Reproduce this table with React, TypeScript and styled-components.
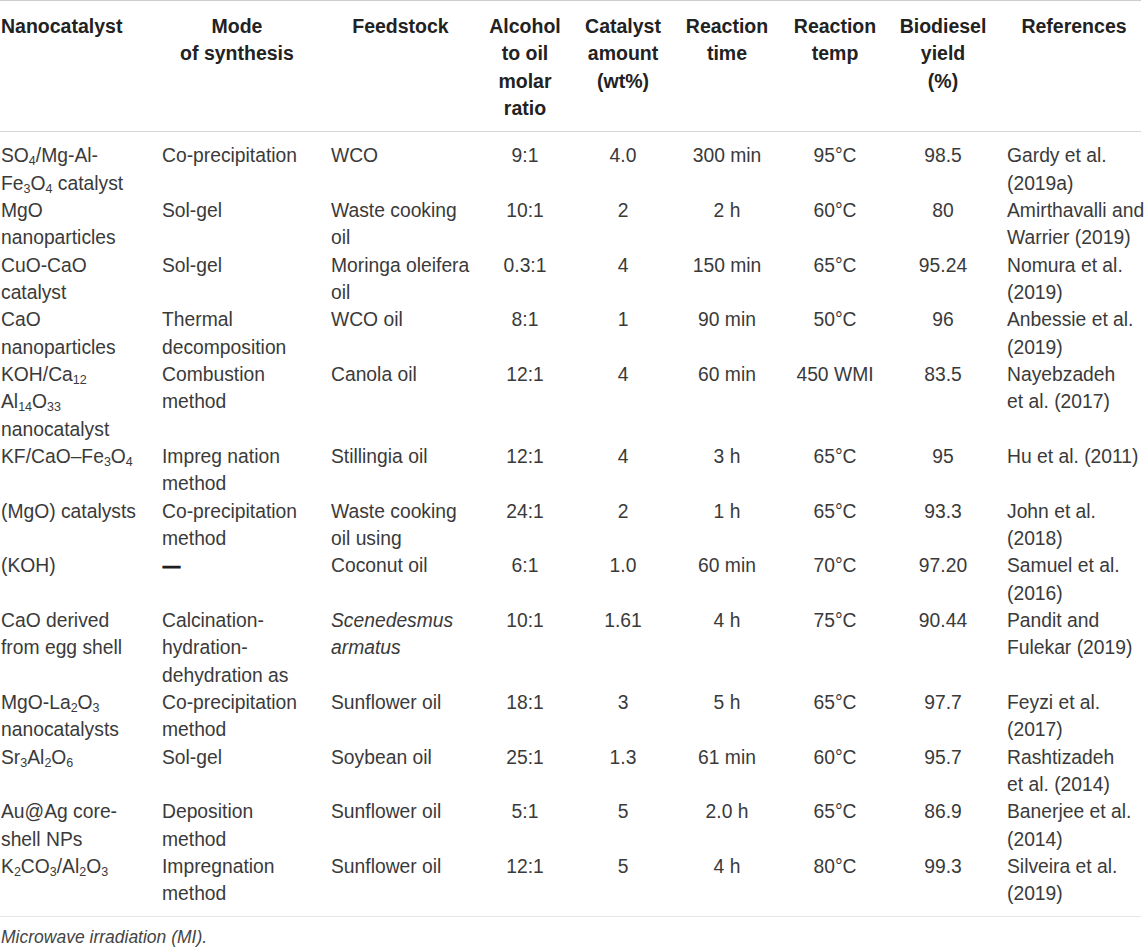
import React from "react";
import styled, { createGlobalStyle } from "styled-components";

const GlobalStyle = createGlobalStyle`
  html, body {
    margin: 0;
    padding: 0;
    background: #ffffff;
  }
  body {
    font-family: "Liberation Sans", Arial, Helvetica, sans-serif;
    color: #333333;
  }
`;

type Align = "left" | "center";

interface ColSpec {
  width: number;
  padL: number;
  padR: number;
  headAlign: Align;
  bodyAlign: Align;
}

const cols: ColSpec[] = [
  { width: 158, padL: 1, padR: 4, headAlign: "left", bodyAlign: "left" },
  { width: 158, padL: 4, padR: 4, headAlign: "center", bodyAlign: "left" },
  { width: 163, padL: 15, padR: 9, headAlign: "center", bodyAlign: "left" },
  { width: 92, padL: 4, padR: 4, headAlign: "center", bodyAlign: "center" },
  { width: 104, padL: 4, padR: 4, headAlign: "center", bodyAlign: "center" },
  { width: 104, padL: 4, padR: 4, headAlign: "center", bodyAlign: "center" },
  { width: 112, padL: 4, padR: 4, headAlign: "center", bodyAlign: "center" },
  { width: 104, padL: 4, padR: 4, headAlign: "center", bodyAlign: "center" },
  { width: 146, padL: 12, padR: 0, headAlign: "center", bodyAlign: "left" },
];

const Page = styled.div`
  width: 1145px;
  padding: 0;
`;

const Table = styled.table`
  width: 1141px;
  table-layout: fixed;
  border-collapse: separate;
  border-spacing: 0;
`;

const Col = styled.col<{ $w: number }>`
  width: ${(p) => p.$w}px;
`;

const HeadCell = styled.th<{ $align: Align; $padL: number; $padR: number }>`
  font-family: "Liberation Sans", Arial, Helvetica, sans-serif;
  font-weight: 700;
  font-size: 19.5px;
  line-height: 27.33px;
  color: #222222;
  text-align: ${(p) => p.$align};
  vertical-align: top;
  white-space: nowrap;
  padding: 12px ${(p) => p.$padR}px 9px ${(p) => p.$padL}px;
  border-top: 1px solid #cdcdcd;
  border-bottom: 1px solid #d6d6d6;
`;

const Body = styled.tbody`
  tr:first-child td {
    padding-top: 10px;
  }
  tr:last-child td {
    padding-bottom: 8px;
    border-bottom: 1px solid #e6e6e6;
  }
`;

const Cell = styled.td<{ $align: Align; $padL: number; $padR: number }>`
  font-family: "Liberation Sans", Arial, Helvetica, sans-serif;
  font-weight: 400;
  font-size: 19.3px;
  line-height: 27.33px;
  color: #3a3a3a;
  text-align: ${(p) => p.$align};
  vertical-align: top;
  white-space: nowrap;
  padding: 0 ${(p) => p.$padR}px 0 ${(p) => p.$padL}px;
`;

const Sub = styled.sub`
  font-size: 12.5px;
  line-height: 0;
  vertical-align: -3px;
`;

const Italic = styled.em`
  font-style: italic;
`;

const Dash = styled.span`
  font-weight: 700;
  font-size: 17px;
  color: #1e1e1e;
  -webkit-text-stroke: 1.2px #1e1e1e;
  margin-left: 1px;
`;

const Note = styled.p`
  margin: 9px 0 0 1px;
  font-family: "Liberation Sans", Arial, Helvetica, sans-serif;
  font-style: italic;
  font-size: 17.5px;
  line-height: 22px;
  color: #444444;
`;

type Content = React.ReactNode[];

const Lines: React.FC<{ lines: Content }> = ({ lines }) => (
  <>
    {lines.map((l, i) => (
      <React.Fragment key={i}>
        {i > 0 && <br />}
        {l}
      </React.Fragment>
    ))}
  </>
);

const header: Content[] = [
  ["Nanocatalyst"],
  ["Mode", "of synthesis"],
  ["Feedstock"],
  ["Alcohol", "to oil", "molar", "ratio"],
  ["Catalyst", "amount", "(wt%)"],
  ["Reaction", "time"],
  ["Reaction", "temp"],
  ["Biodiesel", "yield", "(%)"],
  ["References"],
];

const rows: Content[][] = [
  [
    [<>SO<Sub>4</Sub>/Mg-Al-</>, <>Fe<Sub>3</Sub>O<Sub>4</Sub> catalyst</>],
    ["Co-precipitation"],
    ["WCO"],
    ["9:1"],
    ["4.0"],
    ["300 min"],
    ["95°C"],
    ["98.5"],
    ["Gardy et al.", "(2019a)"],
  ],
  [
    ["MgO", "nanoparticles"],
    ["Sol-gel"],
    ["Waste cooking", "oil"],
    ["10:1"],
    ["2"],
    ["2 h"],
    ["60°C"],
    ["80"],
    ["Amirthavalli and", "Warrier (2019)"],
  ],
  [
    ["CuO-CaO", "catalyst"],
    ["Sol-gel"],
    ["Moringa oleifera", "oil"],
    ["0.3:1"],
    ["4"],
    ["150 min"],
    ["65°C"],
    ["95.24"],
    ["Nomura et al.", "(2019)"],
  ],
  [
    ["CaO", "nanoparticles"],
    ["Thermal", "decomposition"],
    ["WCO oil"],
    ["8:1"],
    ["1"],
    ["90 min"],
    ["50°C"],
    ["96"],
    ["Anbessie et al.", "(2019)"],
  ],
  [
    [
      <>KOH/Ca<Sub>12</Sub></>,
      <>Al<Sub>14</Sub>O<Sub>33</Sub></>,
      "nanocatalyst",
    ],
    ["Combustion", "method"],
    ["Canola oil"],
    ["12:1"],
    ["4"],
    ["60 min"],
    ["450 WMI"],
    ["83.5"],
    ["Nayebzadeh", "et al. (2017)"],
  ],
  [
    [<>KF/CaO–Fe<Sub>3</Sub>O<Sub>4</Sub></>],
    ["Impreg nation", "method"],
    ["Stillingia oil"],
    ["12:1"],
    ["4"],
    ["3 h"],
    ["65°C"],
    ["95"],
    ["Hu et al. (2011)"],
  ],
  [
    ["(MgO) catalysts"],
    ["Co-precipitation", "method"],
    ["Waste cooking", "oil using"],
    ["24:1"],
    ["2"],
    ["1 h"],
    ["65°C"],
    ["93.3"],
    ["John et al.", "(2018)"],
  ],
  [
    ["(KOH)"],
    [<Dash>—</Dash>],
    ["Coconut oil"],
    ["6:1"],
    ["1.0"],
    ["60 min"],
    ["70°C"],
    ["97.20"],
    ["Samuel et al.", "(2016)"],
  ],
  [
    ["CaO derived", "from egg shell"],
    ["Calcination-", "hydration-", "dehydration as"],
    [<Italic>Scenedesmus</Italic>, <Italic>armatus</Italic>],
    ["10:1"],
    ["1.61"],
    ["4 h"],
    ["75°C"],
    ["90.44"],
    ["Pandit and", "Fulekar (2019)"],
  ],
  [
    [<>MgO-La<Sub>2</Sub>O<Sub>3</Sub></>, "nanocatalysts"],
    ["Co-precipitation", "method"],
    ["Sunflower oil"],
    ["18:1"],
    ["3"],
    ["5 h"],
    ["65°C"],
    ["97.7"],
    ["Feyzi et al.", "(2017)"],
  ],
  [
    [<>Sr<Sub>3</Sub>Al<Sub>2</Sub>O<Sub>6</Sub></>],
    ["Sol-gel"],
    ["Soybean oil"],
    ["25:1"],
    ["1.3"],
    ["61 min"],
    ["60°C"],
    ["95.7"],
    ["Rashtizadeh", "et al. (2014)"],
  ],
  [
    ["Au@Ag core-", "shell NPs"],
    ["Deposition", "method"],
    ["Sunflower oil"],
    ["5:1"],
    ["5"],
    ["2.0 h"],
    ["65°C"],
    ["86.9"],
    ["Banerjee et al.", "(2014)"],
  ],
  [
    [<>K<Sub>2</Sub>CO<Sub>3</Sub>/Al<Sub>2</Sub>O<Sub>3</Sub></>],
    ["Impregnation", "method"],
    ["Sunflower oil"],
    ["12:1"],
    ["5"],
    ["4 h"],
    ["80°C"],
    ["99.3"],
    ["Silveira et al.", "(2019)"],
  ],
];

export default function App() {
  return (
    <Page>
      <GlobalStyle />
      <Table>
        <colgroup>
          {cols.map((c, i) => (
            <Col key={i} $w={c.width} />
          ))}
        </colgroup>
        <thead>
          <tr>
            {header.map((h, i) => (
              <HeadCell
                key={i}
                $align={cols[i].headAlign}
                $padL={cols[i].padL}
                $padR={cols[i].padR}
              >
                <Lines lines={h} />
              </HeadCell>
            ))}
          </tr>
        </thead>
        <Body>
          {rows.map((r, ri) => (
            <tr key={ri}>
              {r.map((c, ci) => (
                <Cell
                  key={ci}
                  $align={cols[ci].bodyAlign}
                  $padL={cols[ci].padL}
                  $padR={cols[ci].padR}
                >
                  <Lines lines={c} />
                </Cell>
              ))}
            </tr>
          ))}
        </Body>
      </Table>
      <Note>Microwave irradiation (MI).</Note>
    </Page>
  );
}
